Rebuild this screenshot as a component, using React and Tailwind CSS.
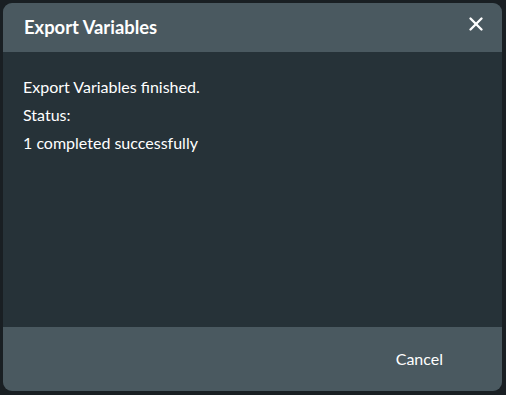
import React from 'react'
import { X } from 'lucide-react'

const App = () => {
    return (
        <div className="w-[506px] h-[395px] bg-[#191f23] pt-[3px] pl-[3px] font-['Lato',sans-serif]">
            <div className="w-[499px] h-[388px] rounded-[9px] overflow-hidden flex flex-col bg-[#263238]">
                {/* header */}
                <div className="h-[49px] bg-[#4a5960] flex items-center justify-between pl-[21px] pr-[15px]">
                    <span className="text-[18.4px] font-bold text-white">Export Variables</span>
                    <button className="text-white mb-[8px]">
                        <X size={22} strokeWidth={2.6} />
                    </button>
                </div>

                {/* body */}
                <div className="flex-1 pt-[21px] pl-[20px] text-[16px] leading-[28px] text-white">
                    <div>Export Variables finished.</div>
                    <div>Status:</div>
                    <div>1 completed successfully</div>
                </div>

                {/* footer */}
                <div className="h-[64px] bg-[#4a5960] flex items-center justify-end pr-[59px]">
                    <button className="text-[16px] text-white">Cancel</button>
                </div>
            </div>
        </div>
    )
}

export default App
